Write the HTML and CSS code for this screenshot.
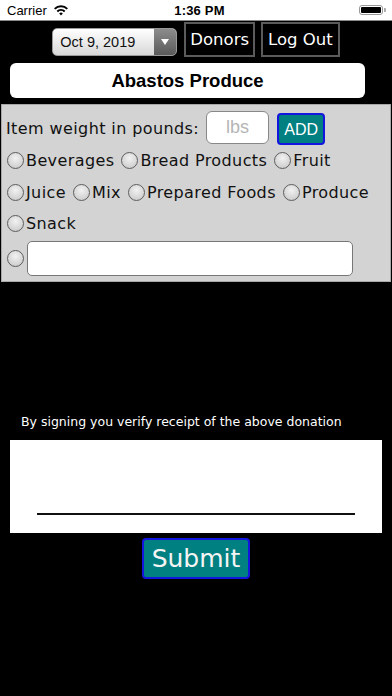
FILE: index.html
```html
<!DOCTYPE html>
<html>
<head>
<meta charset="utf-8">
<link rel="stylesheet" href="styles.css">
</head>
<body>
<div class="status">
  <div class="status-left">
    <span class="carrier">Carrier</span>
    <svg class="wifi" width="16" height="12" viewBox="0 0 16 12">
      <path d="M1 4.2 A10 10 0 0 1 15 4.2 L13.6 5.6 A8 8 0 0 0 2.4 5.6 Z" fill="#000"/>
      <path d="M3.6 6.8 A6.4 6.4 0 0 1 12.4 6.8 L11 8.2 A4.4 4.4 0 0 0 5 8.2 Z" fill="#000"/>
      <path d="M6.2 9.4 A2.6 2.6 0 0 1 9.8 9.4 L8 11.4 Z" fill="#000"/>
    </svg>
  </div>
  <span class="time">1:36 PM</span>
  <div class="battery"><div class="battery-body"><div class="battery-fill"></div></div><div class="battery-tip"></div></div>
</div>

<div class="topbar">
  <div class="picker">
    <span class="picker-text">Oct 9, 2019</span>
    <span class="picker-arrow"><svg width="8" height="6" viewBox="0 0 8 6"><path d="M0 0 H8 L4 6 Z" fill="#fff"/></svg></span>
  </div>
  <div class="navbtn">Donors</div>
  <div class="navbtn">Log Out</div>
</div>

<div class="title">Abastos Produce</div>

<div class="panel">
  <div class="weight-row">
    <span class="label">Item weight in pounds:</span>
    <div class="lbs">lbs</div>
    <div class="add">ADD</div>
  </div>
  <div class="radio-row">
    <span class="opt"><span class="radio"></span>Beverages</span>
    <span class="opt"><span class="radio"></span>Bread Products</span>
    <span class="opt"><span class="radio"></span>Fruit</span>
  </div>
  <div class="radio-row">
    <span class="opt"><span class="radio"></span>Juice</span>
    <span class="opt"><span class="radio"></span>Mix</span>
    <span class="opt"><span class="radio"></span>Prepared Foods</span>
    <span class="opt"><span class="radio"></span>Produce</span>
  </div>
  <div class="radio-row">
    <span class="opt"><span class="radio"></span>Snack</span>
  </div>
  <div class="other-row">
    <span class="radio"></span>
    <div class="other-input"></div>
  </div>
</div>

<div class="sign">
  <div class="sign-text">By signing you verify receipt of the above donation</div>
  <div class="sign-box"><div class="sign-line"></div></div>
  <div class="submit-wrap"><div class="submit">Submit</div></div>
</div>
</body>
</html>
```

FILE: styles.css
```css
html, body {
  margin: 0;
  padding: 0;
  background: #000;
}
body {
  width: 392px;
  height: 696px;
  overflow: hidden;
}

.status {
  height: 20px;
  background: #fff;
  border-bottom: 1px solid #8a8a8a;
  display: flex;
  align-items: center;
  justify-content: space-between;
  font-family: "Liberation Sans", Arial, sans-serif;
  font-size: 13px;
  color: #000;
}
.status-left {
  display: flex;
  align-items: center;
  padding-left: 7px;
  gap: 6px;
  width: 120px;
}
.time {
  font-weight: bold;
  font-size: 13px;
  letter-spacing: 0.2px;
}
.battery {
  width: 120px;
  display: flex;
  justify-content: flex-end;
  align-items: center;
  padding-right: 6px;
  box-sizing: border-box;
}
.battery-body {
  width: 24px;
  height: 10px;
  border: 1px solid #999;
  border-radius: 3px;
  padding: 1px;
  box-sizing: border-box;
}
.battery-fill {
  width: 100%;
  height: 100%;
  background: #000;
  border-radius: 1px;
}
.battery-tip {
  width: 2px;
  height: 4px;
  background: #aaa;
  border-radius: 0 1px 1px 0;
  margin-left: 1px;
}

.topbar {
  display: flex;
  justify-content: center;
  align-items: flex-start;
  padding-top: 1px;
  padding-left: 0;
  height: 36px;
}
.picker {
  margin-top: 6px;
  width: 125px;
  height: 28px;
  box-sizing: border-box;
  border: 1px solid #9a9a9a;
  border-radius: 5px;
  background: linear-gradient(#ffffff, #d8d8d8);
  display: flex;
  overflow: hidden;
  margin-right: 7px;
}
.picker-text {
  flex: 1;
  font-family: "Liberation Sans", Arial, sans-serif;
  font-size: 14.5px;
  color: #111;
  display: flex;
  align-items: center;
  padding-left: 7px;
}
.picker-arrow {
  width: 22px;
  background: linear-gradient(#8c8c8c, #5a5a5a);
  display: flex;
  align-items: center;
  justify-content: center;
}
.navbtn {
  height: 35px;
  box-sizing: border-box;
  border: 2px solid #5b5b5b;
  color: #fff;
  font-family: "DejaVu Sans", Verdana, sans-serif;
  font-size: 16.5px;
  display: flex;
  align-items: center;
  justify-content: center;
  padding: 0 4px;
  margin-right: 6px;
}
.navbtn:last-child { margin-right: 0; padding: 0 5px; }

.title {
  margin: 5px 27px 0 10px;
  height: 35px;
  background: #fff;
  border-radius: 6px;
  display: flex;
  align-items: center;
  justify-content: center;
  font-family: "Liberation Sans", Arial, sans-serif;
  font-weight: bold;
  font-size: 18.5px;
  color: #000;
}

.panel {
  margin: 6px 1px 0 1px;
  height: 178px;
  box-sizing: border-box;
  background: #d3d3d3;
  border: 1px solid #a8a8a8;
  font-family: "DejaVu Sans", Verdana, sans-serif;
  font-size: 16px;
  color: #111;
  padding: 5px 0 0 4px;
}
.weight-row {
  display: flex;
  align-items: center;
  height: 34px;
}
.label {
  margin-top: 3px;
  letter-spacing: 0.4px;
}
.lbs {
  margin-left: 7px;
  width: 63px;
  height: 33px;
  box-sizing: border-box;
  background: #fff;
  border: 1px solid #888;
  border-radius: 6px;
  font-family: "Liberation Sans", Arial, sans-serif;
  font-size: 18px;
  color: #b5b5b5;
  display: flex;
  align-items: center;
  justify-content: center;
}
.add {
  margin-left: 8px;
  margin-top: 3px;
  width: 48px;
  height: 32px;
  box-sizing: border-box;
  background: #008080;
  border: 2px solid #1515e0;
  border-radius: 4px;
  color: #fff;
  font-family: "Liberation Sans", Arial, sans-serif;
  font-size: 16px;
  display: flex;
  align-items: center;
  justify-content: center;
  padding-top: 2px;
}
.radio-row {
  display: flex;
  align-items: center;
  height: 31.5px;
  gap: 6px;
  letter-spacing: 0.4px;
}
.weight-row + .radio-row { margin-top: 1px; }
.opt {
  display: flex;
  align-items: center;
  white-space: nowrap;
}
.radio {
  display: inline-block;
  width: 17px;
  height: 17px;
  box-sizing: border-box;
  border: 1px solid #5e5e5e;
  border-radius: 50%;
  background: radial-gradient(circle at 50% 35%, #f2f2f2, #c4c4c4);
  margin-right: 2px;
  margin-left: 1px;
  flex: none;
}
.other-row {
  display: flex;
  align-items: center;
  margin-top: 1px;
}
.other-input {
  width: 326px;
  height: 35px;
  box-sizing: border-box;
  background: #fff;
  border: 1px solid #777;
  border-radius: 5px;
  margin-left: 1px;
}

.sign {
  padding-top: 131px;
}
.sign-text {
  color: #fff;
  font-family: "DejaVu Sans", Verdana, sans-serif;
  font-size: 12.5px;
  padding-left: 21px;
  height: 18px;
  line-height: 18px;
}
.sign-box {
  margin: 9px 10px 0 10px;
  height: 93px;
  background: #fff;
  display: flex;
  align-items: flex-end;
  padding: 0 27px 18px 27px;
  box-sizing: border-box;
}
.sign-line {
  width: 318px;
  height: 2px;
  background: #111;
}
.submit-wrap {
  display: flex;
  justify-content: center;
  margin-top: 5px;
}
.submit {
  width: 108px;
  height: 41px;
  box-sizing: border-box;
  background: #008080;
  border: 2px solid #1515e0;
  border-radius: 4px;
  color: #f4f4f4;
  font-family: "DejaVu Sans", Verdana, sans-serif;
  font-size: 25px;
  display: flex;
  align-items: center;
  justify-content: center;
}
```
